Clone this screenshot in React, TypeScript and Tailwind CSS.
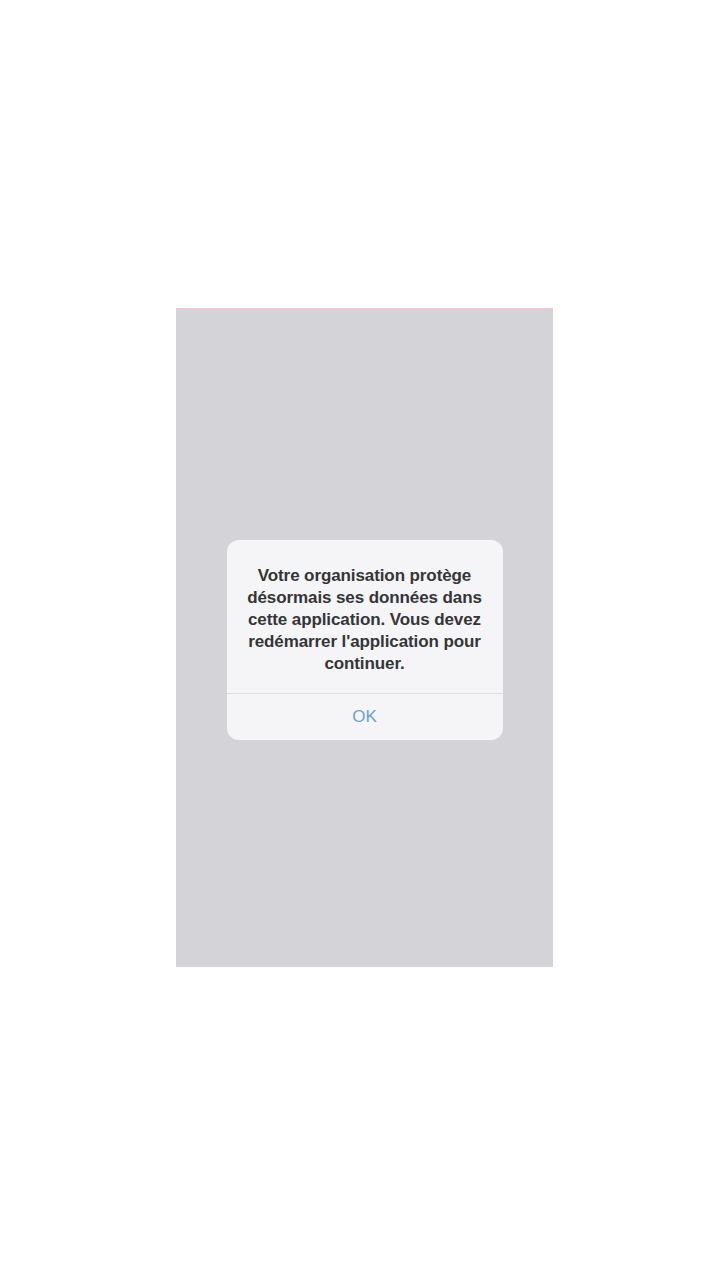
export default function App() {
  return (
    <div className="w-[728px] h-[1276px] bg-white pt-[308px] pl-[176px]" style={{ fontFamily: '"Liberation Sans", Arial, sans-serif' }}>
      <div className="w-[377px] h-[659px] bg-[#d4d3d7] border-t-2 border-[#ecc9ca] flex justify-center pt-[230px]">
        <div className="w-[276px] h-[200px] bg-[#f5f5f7] rounded-[12px] flex flex-col">
          <div className="h-[153px] flex items-start justify-center pt-[25px] px-3">
            <p className="text-center text-[17px] leading-[22px] font-bold text-[#353537] tracking-[-0.1px]">
              Votre organisation protège désormais ses données dans cette application. Vous devez redémarrer l'application pour continuer.
            </p>
          </div>
          <div className="h-px bg-[#dcdcdf]" />
          <div className="flex-1 flex items-center justify-center text-[17px] text-[#6aa1cf]">OK</div>
        </div>
      </div>
    </div>
  );
}
